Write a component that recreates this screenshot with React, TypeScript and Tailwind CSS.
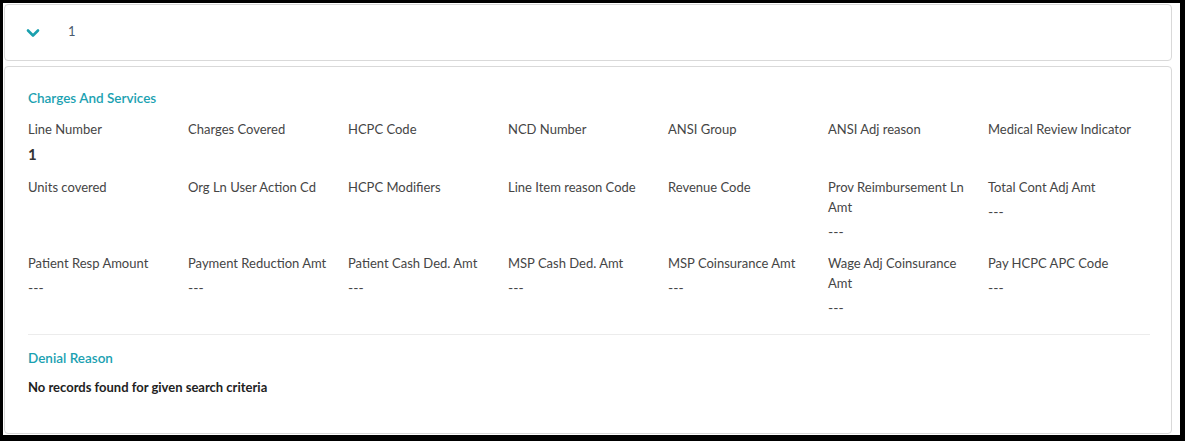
import React from "react";

const rows: { label: string; value?: string; bold?: boolean }[][] = [
  [
    { label: "Line Number", value: "1", bold: true },
    { label: "Charges Covered" },
    { label: "HCPC Code" },
    { label: "NCD Number" },
    { label: "ANSI Group" },
    { label: "ANSI Adj reason" },
    { label: "Medical Review Indicator" },
  ],
  [
    { label: "Units covered" },
    { label: "Org Ln User Action Cd" },
    { label: "HCPC Modifiers" },
    { label: "Line Item reason Code" },
    { label: "Revenue Code" },
    { label: "Prov Reimbursement Ln Amt", value: "---" },
    { label: "Total Cont Adj Amt", value: "---" },
  ],
  [
    { label: "Patient Resp Amount", value: "---" },
    { label: "Payment Reduction Amt", value: "---" },
    { label: "Patient Cash Ded. Amt", value: "---" },
    { label: "MSP Cash Ded. Amt", value: "---" },
    { label: "MSP Coinsurance Amt", value: "---" },
    { label: "Wage Adj Coinsurance Amt", value: "---" },
    { label: "Pay HCPC APC Code", value: "---" },
  ],
];

export default function App() {
  const cells = rows.flat();
  return (
    <div
      className="w-[1185px] h-[441px] bg-black pt-[3px] pl-[3px] pr-[5px] pb-[6px]"
      style={{ fontFamily: "Lato, 'Open Sans', sans-serif" }}
    >
      <div className="bg-white h-full pt-[1px] pl-[1px] pr-[8px] pb-[1px] flex flex-col gap-[5px]">
        <div className="h-[57px] shrink-0 border border-[#d9d9d9] rounded-[4px] flex items-center pl-[21px]">
          <svg width="14" height="10" viewBox="0 0 14 10" className="mt-[1px]">
            <path d="M2 2.5 L7 7.5 L12 2.5" fill="none" stroke="#1aa0ae" strokeWidth="2.6" strokeLinecap="round" strokeLinejoin="round" />
          </svg>
          <span className="ml-[28px] mb-[3px] text-[13px] leading-[20px] text-[#4a5a6c]">1</span>
        </div>
        <div className="flex-1 border border-[#d9d9d9] rounded-[4px] pl-[23px] pr-[21px] pt-[21px]">
          <div className="text-[13.5px] leading-[20px] font-semibold text-[#1ba1b1]">Charges And Services</div>
          <div className="mt-[11px] grid grid-cols-[repeat(7,160px)] gap-y-[11px]">
            {cells.map((c, i) => (
              <div key={i} className={i < 7 ? "pr-[12px] pb-[2px]" : "pr-[12px]"}>
                <div className="text-[13px] leading-[20px] text-[#454545]">{c.label}</div>
                {c.value && (
                  <div
                    className={
                      c.bold
                        ? "mt-[5px] text-[15px] leading-[20px] font-bold text-[#333333]"
                        : "mt-[5px] text-[14px] leading-[20px] text-[#454545]"
                    }
                  >
                    {c.value}
                  </div>
                )}
              </div>
            ))}
          </div>
          <div className="mt-[16px] h-px bg-[#ececec]" />
          <div className="mt-[13px] text-[13.5px] leading-[20px] font-semibold text-[#1ba1b1]">Denial Reason</div>
          <div className="mt-[9px] text-[13px] leading-[20px] font-bold text-[#222222]">
            No records found for given search criteria
          </div>
        </div>
      </div>
    </div>
  );
}
